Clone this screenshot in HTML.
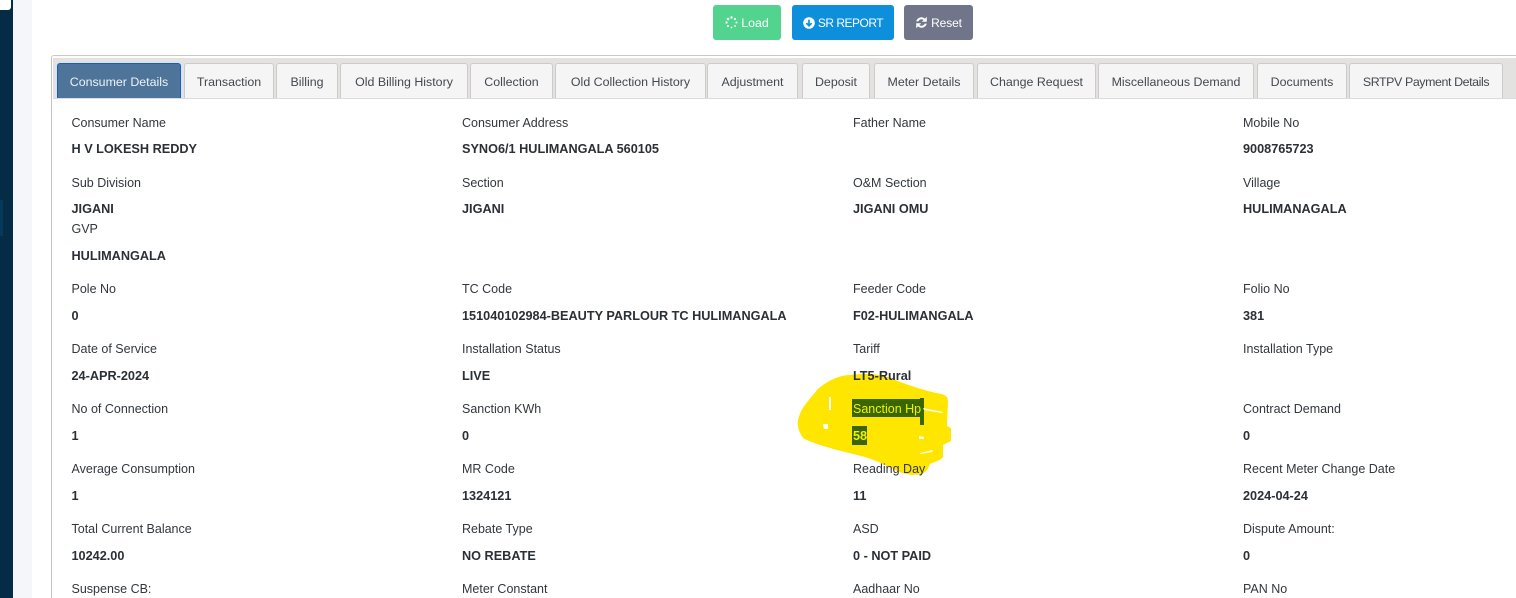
<!DOCTYPE html>
<html lang="en"><head><meta charset="utf-8"><title>Consumer Details</title>
<style>
html,body{margin:0;padding:0;width:1516px;height:598px;overflow:hidden;background:#fff}
body{position:relative;font-family:"Liberation Sans","Noto Sans CJK SC",sans-serif;font-size:12.5px;color:#343a40}
.a{position:absolute}
.l,.v{position:absolute;white-space:nowrap;line-height:20px}
.l{color:#32373d;margin-top:1px}
.v{font-weight:700;color:#2b3036;font-size:12.7px}
.t{position:absolute;top:63px;height:35px;box-sizing:border-box;background:#f5f5f5;border:1px solid #cdcbc9;border-bottom:0;border-radius:3px 3px 0 0;text-align:center;line-height:36px;color:#43484f;white-space:nowrap;font-size:12.4px}
.t.on{background:#4e7599;color:#eef2f6;border-color:#0d5be8;border-bottom:0}
.b{position:absolute;top:5px;height:35px;border-radius:3px;color:#fff;white-space:nowrap;display:flex;align-items:center;justify-content:center;gap:3px}
</style></head><body>
<div class="a" style="left:0;top:0;width:13px;height:598px;background:#052c47"></div>
<div class="a" style="left:0;top:200px;width:3px;height:36px;background:#07395a"></div>
<div class="a" style="left:0;top:0;width:11px;height:10px;background:#fff;border-radius:0 0 3px 0"></div>
<div class="a" style="left:13px;top:0;width:19px;height:598px;background:#f5f6fa"></div>

<div class="b" style="left:713px;width:68px;background:#52d48f">
<svg width="13" height="13" viewBox="0 0 13 13"><g fill="#fff"><circle cx="6.5" cy="1.5" r="1.2"/><circle cx="10" cy="3" r="1.1"/><circle cx="11.5" cy="6.5" r="1"/><circle cx="10" cy="10" r=".9"/><circle cx="6.5" cy="11.5" r=".9"/><circle cx="3" cy="10" r="1"/><circle cx="1.5" cy="6.5" r="1.1"/><circle cx="3" cy="3" r="1.3"/></g></svg><span style="font-size:12.4px">Load</span></div>
<div class="b" style="left:792px;width:102px;background:#0e8fdc">
<svg width="12" height="12" viewBox="0 0 12 12"><circle cx="6" cy="6" r="5.8" fill="#fff"/><path d="M6 2.6V8.6M3.4 6.1L6 8.8L8.6 6.1" fill="none" stroke="#0e8fdc" stroke-width="1.7"/></svg><span style="font-size:12px;letter-spacing:-.5px">SR REPORT</span></div>
<div class="b" style="left:904px;width:69px;background:#717589">
<svg width="13" height="13" viewBox="0 0 13 13"><path d="M1.2 5.4A5.4 5.4 0 0 1 10 2.6L11.8 .8V5.8H6.8L8.6 4A3.4 3.4 0 0 0 3.3 5.4ZM11.8 7.6A5.4 5.4 0 0 1 3 10.4L1.2 12.2V7.2H6.2L4.4 9A3.4 3.4 0 0 0 9.7 7.6Z" fill="#fff"/></svg><span style="font-size:12px;letter-spacing:-.1px">Reset</span></div>

<div class="a" style="left:51px;top:55px;width:1465px;height:543px;box-sizing:border-box;border-top:1px solid #c9c9c9;border-left:1px solid #c4c4c4;border-radius:3px 0 0 0"></div>
<div class="a" style="left:53px;top:58px;width:1463px;height:40px;background:#e4e2e0;border-bottom:1px solid #dedcda;box-sizing:content-box"></div>

<div class="t on" style="left:57px;width:124px">Consumer Details</div>
<div class="t" style="left:184px;width:90px">Transaction</div>
<div class="t" style="left:276px;width:62px">Billing</div>
<div class="t" style="left:340px;width:128px">Old Billing History</div>
<div class="t" style="left:470px;width:83px">Collection</div>
<div class="t" style="left:555px;width:151px">Old Collection History</div>
<div class="t" style="left:707px;width:91px">Adjustment</div>
<div class="t" style="left:802px;width:68px">Deposit</div>
<div class="t" style="left:874px;width:100px">Meter Details</div>
<div class="t" style="left:977px;width:119px">Change Request</div>
<div class="t" style="left:1098px;width:156px">Miscellaneous Demand</div>
<div class="t" style="left:1257px;width:90px">Documents</div>
<div class="t" style="left:1349px;width:154px;letter-spacing:-.4px">SRTPV Payment Details</div>

<svg class="a" style="left:0;top:0" width="1516" height="598" viewBox="0 0 1516 598">
<path d="M817 390C824 383 838 375 850 375C866 373 880 374 890 378C905 384 925 391 941 394C946 395 948 397 948 401L947 426L951 428L951 441L943 445L943 457C940 461 934 462 930 464C928 469 926 472 922 474C912 476 903 474 895 470C885 465 875 460 865 457C850 453 840 451 830 448C820 445 810 442 803 438C799 432 797 426 798 420C800 412 803 407 808 401Z" fill="#ffe600"/>
<rect x="852" y="399" width="68" height="18" fill="#3a6600"/>
<rect x="920" y="398" width="4" height="27" fill="#3a6600"/>
<rect x="852" y="426" width="15" height="19" fill="#3a6600"/>
<path d="M829 397h2v13h-2zM823 424h5v5h-4zM923 408l20 4-1 1-18-3zM919 436l5 1v2h-5zM920 453l13-3-1 2-12 2z" fill="#fff"/>
</svg>

<div class="l" style="left:71.5px;top:112px">Consumer Name</div><div class="v" style="left:71.5px;top:139px">H V LOKESH REDDY</div>
<div class="l" style="left:462px;top:112px">Consumer Address</div><div class="v" style="left:462px;top:139px">SYNO6/1 HULIMANGALA 560105</div>
<div class="l" style="left:853px;top:112px">Father Name</div>
<div class="l" style="left:1243px;top:112px">Mobile No</div><div class="v" style="left:1243px;top:139px">9008765723</div>

<div class="l" style="left:71.5px;top:172px">Sub Division</div><div class="v" style="left:71.5px;top:199px">JIGANI</div>
<div class="l" style="left:462px;top:172px">Section</div><div class="v" style="left:462px;top:199px">JIGANI</div>
<div class="l" style="left:853px;top:172px">O&amp;M Section</div><div class="v" style="left:853px;top:199px">JIGANI OMU</div>
<div class="l" style="left:1243px;top:172px">Village</div><div class="v" style="left:1243px;top:199px">HULIMANAGALA</div>

<div class="l" style="left:71.5px;top:218px">GVP</div><div class="v" style="left:71.5px;top:246px">HULIMANGALA</div>

<div class="l" style="left:71.5px;top:278px">Pole No</div><div class="v" style="left:71.5px;top:306px">0</div>
<div class="l" style="left:462px;top:278px">TC Code</div><div class="v" style="left:462px;top:306px">151040102984-BEAUTY PARLOUR TC HULIMANGALA</div>
<div class="l" style="left:853px;top:278px">Feeder Code</div><div class="v" style="left:853px;top:306px">F02-HULIMANGALA</div>
<div class="l" style="left:1243px;top:278px">Folio No</div><div class="v" style="left:1243px;top:306px">381</div>

<div class="l" style="left:71.5px;top:338px">Date of Service</div><div class="v" style="left:71.5px;top:366px">24-APR-2024</div>
<div class="l" style="left:462px;top:338px">Installation Status</div><div class="v" style="left:462px;top:366px">LIVE</div>
<div class="l" style="left:853px;top:338px">Tariff</div><div class="v" style="left:853px;top:366px">LT5-Rural</div>
<div class="l" style="left:1243px;top:338px">Installation Type</div>

<div class="l" style="left:71.5px;top:398px">No of Connection</div><div class="v" style="left:71.5px;top:426px">1</div>
<div class="l" style="left:462px;top:398px">Sanction KWh</div><div class="v" style="left:462px;top:426px">0</div>
<div class="l" style="left:853px;top:398px;color:#f2f000">Sanction Hp</div><div class="v" style="left:853px;top:426px;color:#f2f000">58</div>
<div class="l" style="left:1243px;top:398px">Contract Demand</div><div class="v" style="left:1243px;top:426px">0</div>

<div class="l" style="left:71.5px;top:458px">Average Consumption</div><div class="v" style="left:71.5px;top:486px">1</div>
<div class="l" style="left:462px;top:458px">MR Code</div><div class="v" style="left:462px;top:486px">1324121</div>
<div class="l" style="left:853px;top:458px">Reading Day</div><div class="v" style="left:853px;top:486px">11</div>
<div class="l" style="left:1243px;top:458px">Recent Meter Change Date</div><div class="v" style="left:1243px;top:486px">2024-04-24</div>

<div class="l" style="left:71.5px;top:518px">Total Current Balance</div><div class="v" style="left:71.5px;top:546px">10242.00</div>
<div class="l" style="left:462px;top:518px">Rebate Type</div><div class="v" style="left:462px;top:546px">NO REBATE</div>
<div class="l" style="left:853px;top:518px">ASD</div><div class="v" style="left:853px;top:546px">0 - NOT PAID</div>
<div class="l" style="left:1243px;top:518px">Dispute Amount:</div><div class="v" style="left:1243px;top:546px">0</div>

<div class="l" style="left:71.5px;top:578px">Suspense CB:</div>
<div class="l" style="left:462px;top:578px">Meter Constant</div>
<div class="l" style="left:853px;top:578px">Aadhaar No</div>
<div class="l" style="left:1243px;top:578px">PAN No</div>
</body></html>
